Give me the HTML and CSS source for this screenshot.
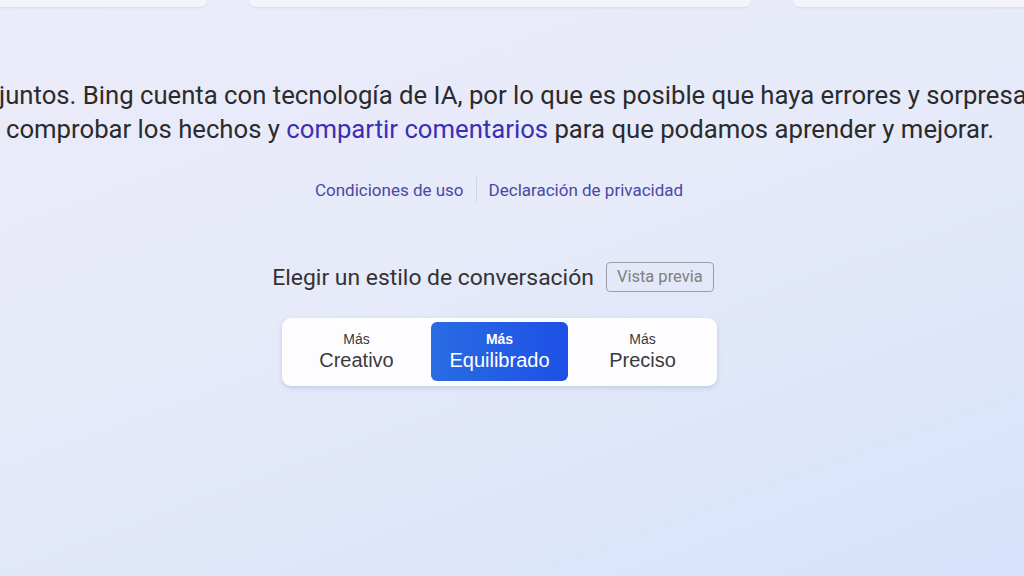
FILE: index.html
```html
<!DOCTYPE html>
<html>
<head>
    <title>Bing Chat</title>
    <meta name="viewport" content="width=device-width, initial-scale=1">
    <link rel="stylesheet" href="styles.css">
</head>
<body>
    <div class="top-cards">
        <div class="card card-left"></div>
        <div class="card card-mid"></div>
        <div class="card card-right"></div>
    </div>
    <div class="disclaimer">
        <div class="line line-1">juntos. Bing cuenta con tecnología de IA, por lo que es posible que haya errores y sorpresas.</div>
        <div class="line line-2">comprobar los hechos y <a href="#" class="link">compartir comentarios</a> para que podamos aprender y mejorar.</div>
    </div>
    <div class="legal">
        <a href="#" class="legal-link">Condiciones de uso</a>
        <span class="legal-sep"></span>
        <a href="#" class="legal-link">Declaración de privacidad</a>
    </div>
    <div class="tone-title">
        <span class="tone-label">Elegir un estilo de conversación</span>
        <span class="badge">Vista previa</span>
    </div>
    <div class="tone-wrap">
        <div class="tone-picker">
            <button class="tone">
                <span class="tone-small">Más</span>
                <span class="tone-big">Creativo</span>
            </button>
            <button class="tone tone-selected">
                <span class="tone-small">Más</span>
                <span class="tone-big">Equilibrado</span>
            </button>
            <button class="tone">
                <span class="tone-small">Más</span>
                <span class="tone-big">Preciso</span>
            </button>
        </div>
    </div>
</body>
</html>
```

FILE: styles.css
```css
html {
	font-family: Roboto, "Liberation Sans", Arial, sans-serif;
  }
  body {
	margin: 0;
	width: 1024px;
	height: 576px;
	overflow: hidden;
	background: linear-gradient(160deg, #ecebf9 0%, #e6eaf9 45%, #dde6fa 75%, #d6e2fc 100%);
	color: #2b2b2b;
  }
  .top-cards {
	display: grid;
	grid-template-columns: 207px 502px 1fr;
	column-gap: 42px;
	height: 7px;
	margin-right: -40px;
  }
  .card {
	background-color: #f4f5fc;
	border-radius: 0 0 8px 8px;
	box-shadow: 0 1px 2px rgba(90, 100, 160, 0.12);
  }
  .card-left {
	border-radius: 0 0 8px 0;
  }
  .disclaimer {
	margin-top: 71px;
	font-size: 25.7px;
	line-height: 34px;
	white-space: nowrap;
  }
  .line-1 {
	margin-left: -1px;
  }
  .line-2 {
	margin-left: 6px;
  }
  .link {
	color: #3b2fb5;
	text-decoration: none;
  }
  .legal {
	margin-top: 31px;
	display: flex;
	justify-content: center;
	align-items: center;
	gap: 12px;
	padding-right: 26px;
	height: 26px;
  }
  .legal-link {
	font-size: 17px;
	color: #4b47a6;
	text-decoration: none;
  }
  .legal-sep {
	width: 1px;
	height: 26px;
	background-color: #d3d6e6;
  }
  .tone-title {
	margin-top: 59px;
	display: flex;
	justify-content: center;
	align-items: center;
	gap: 12px;
	padding-right: 38px;
  }
  .tone-label {
	font-size: 22.9px;
	color: #333;
  }
  .badge {
	font-size: 16.5px;
	color: #808080;
	border: 1px solid #9c9ca4;
	border-radius: 4px;
	padding: 4px 10px 5px;
	line-height: 19px;
  }
  .tone-wrap {
	margin-top: 26px;
	display: flex;
	justify-content: center;
  }
  .tone-picker {
	display: flex;
	background-color: #fdfdff;
	border-radius: 9px;
	padding: 4px 4px 5px;
	gap: 4px;
	margin-left: -25px;
	box-shadow: 0 2px 5px rgba(60, 70, 120, 0.18);
  }
  .tone {
	width: 141px;
	height: 59px;
	border: none;
	border-radius: 6px;
	background: transparent;
	font-family: "Liberation Sans", Arial, sans-serif;
	color: #3a3a3a;
	display: flex;
	flex-direction: column;
	align-items: center;
	justify-content: center;
	padding: 0;
	cursor: pointer;
  }
  .tone-selected {
	width: 137px;
	background: linear-gradient(90deg, #2a6ce2, #1d50e6);
	color: #fff;
  }
  .tone-small {
	font-size: 14px;
	line-height: 17px;
  }
  .tone-big {
	font-size: 20px;
	line-height: 24px;
  }
  .tone-selected .tone-small {
	font-weight: bold;
  }
```
